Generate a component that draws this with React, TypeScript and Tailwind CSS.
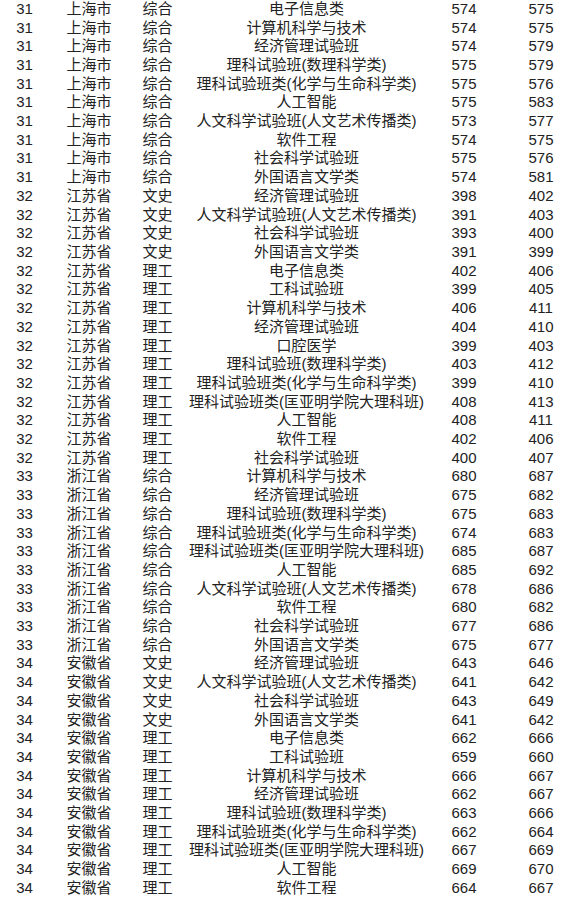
import React from "react";

const raw = `31|上海市|综合|电子信息类|574|575
31|上海市|综合|计算机科学与技术|574|575
31|上海市|综合|经济管理试验班|574|579
31|上海市|综合|理科试验班(数理科学类)|575|579
31|上海市|综合|理科试验班类(化学与生命科学类)|575|576
31|上海市|综合|人工智能|575|583
31|上海市|综合|人文科学试验班(人文艺术传播类)|573|577
31|上海市|综合|软件工程|574|575
31|上海市|综合|社会科学试验班|575|576
31|上海市|综合|外国语言文学类|574|581
32|江苏省|文史|经济管理试验班|398|402
32|江苏省|文史|人文科学试验班(人文艺术传播类)|391|403
32|江苏省|文史|社会科学试验班|393|400
32|江苏省|文史|外国语言文学类|391|399
32|江苏省|理工|电子信息类|402|406
32|江苏省|理工|工科试验班|399|405
32|江苏省|理工|计算机科学与技术|406|411
32|江苏省|理工|经济管理试验班|404|410
32|江苏省|理工|口腔医学|399|403
32|江苏省|理工|理科试验班(数理科学类)|403|412
32|江苏省|理工|理科试验班类(化学与生命科学类)|399|410
32|江苏省|理工|理科试验班类(匡亚明学院大理科班)|408|413
32|江苏省|理工|人工智能|408|411
32|江苏省|理工|软件工程|402|406
32|江苏省|理工|社会科学试验班|400|407
33|浙江省|综合|计算机科学与技术|680|687
33|浙江省|综合|经济管理试验班|675|682
33|浙江省|综合|理科试验班(数理科学类)|675|683
33|浙江省|综合|理科试验班类(化学与生命科学类)|674|683
33|浙江省|综合|理科试验班类(匡亚明学院大理科班)|685|687
33|浙江省|综合|人工智能|685|692
33|浙江省|综合|人文科学试验班(人文艺术传播类)|678|686
33|浙江省|综合|软件工程|680|682
33|浙江省|综合|社会科学试验班|677|686
33|浙江省|综合|外国语言文学类|675|677
34|安徽省|文史|经济管理试验班|643|646
34|安徽省|文史|人文科学试验班(人文艺术传播类)|641|642
34|安徽省|文史|社会科学试验班|643|649
34|安徽省|文史|外国语言文学类|641|642
34|安徽省|理工|电子信息类|662|666
34|安徽省|理工|工科试验班|659|660
34|安徽省|理工|计算机科学与技术|666|667
34|安徽省|理工|经济管理试验班|662|667
34|安徽省|理工|理科试验班(数理科学类)|663|666
34|安徽省|理工|理科试验班类(化学与生命科学类)|662|664
34|安徽省|理工|理科试验班类(匡亚明学院大理科班)|667|669
34|安徽省|理工|人工智能|669|670
34|安徽省|理工|软件工程|664|667`;

const rows = raw.split("\n").map((l) => l.split("|"));

export default function App() {
  return (
    <div
      className="w-[564px] h-[902px] overflow-hidden bg-white text-[#222] text-[15px] leading-none"
      style={{ fontFamily: '"Liberation Sans", "Noto Sans CJK SC", sans-serif' }}
    >
      <div className="mt-[-1px] flex flex-col">
        {rows.map((r, i) => (
          <div
            key={i}
            className="grid grid-cols-[49px_80px_57px_241px_74px_80px] h-[18.71px] items-center whitespace-nowrap"
          >
            {r.map((c, j) => (
              <div key={j} className="text-center">
                {c}
              </div>
            ))}
          </div>
        ))}
      </div>
    </div>
  );
}
